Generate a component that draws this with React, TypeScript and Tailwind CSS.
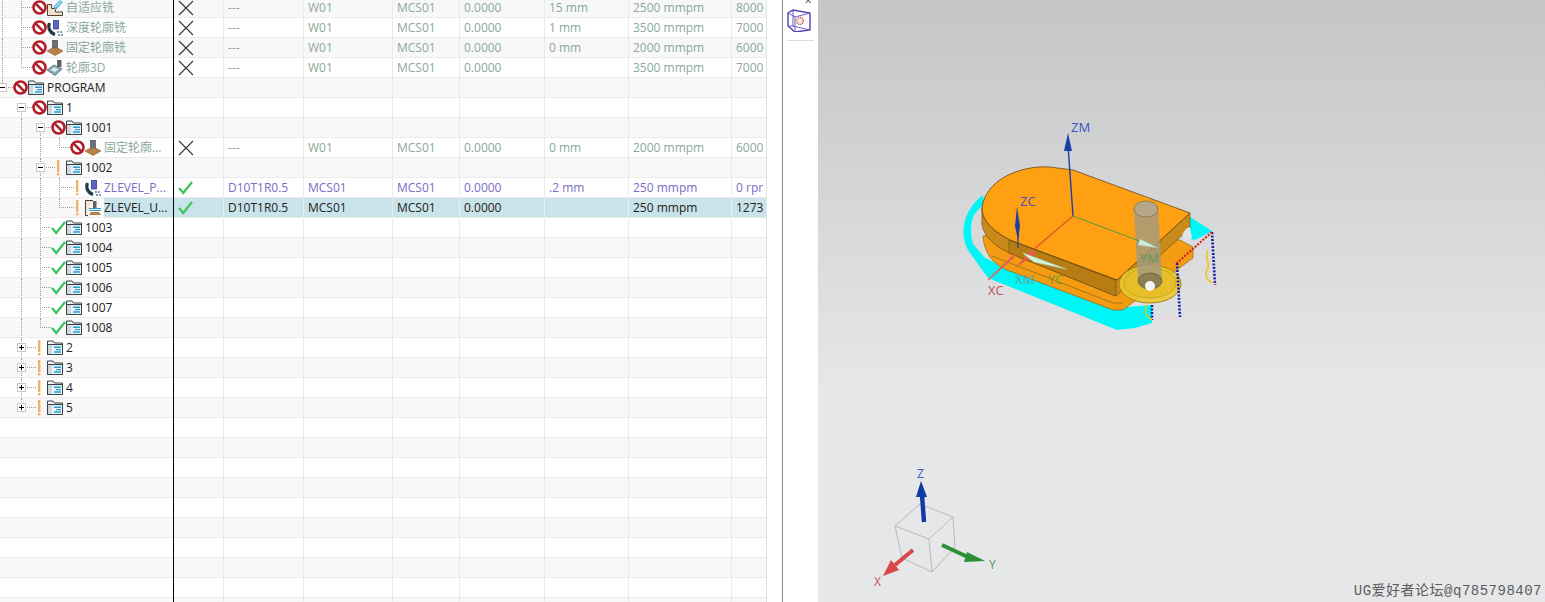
import React from "react";

const TEXT_FONT = "font-['Open_Sans','Noto_Sans_CJK_SC',sans-serif]";

type Status = "stop" | "warn" | "ok";
type Kind = "folder" | "adaptive" | "depth" | "fixed" | "contour" | "unfinish";

type Row = {
  name?: string;
  level?: number; // x of the status icon
  status?: Status;
  kind?: Kind;
  box?: "minus" | "plus";
  tone?: "off" | "new" | "sel" | "plain";
  path?: Status | "x";
  cells?: string[];
};

function offCells(a: string, b: string, c: string) {
  return ["---", "W01", "MCS01", "0.0000", a, b, c];
}

const rows: Row[] = [
  { name: "自适应铣", level: 32, status: "stop", kind: "adaptive", tone: "off", path: "x", cells: offCells("15 mm", "2500 mmpm", "8000") },
  { name: "深度轮廓铣", level: 32, status: "stop", kind: "depth", tone: "off", path: "x", cells: offCells("1 mm", "3500 mmpm", "7000") },
  { name: "固定轮廓铣", level: 32, status: "stop", kind: "fixed", tone: "off", path: "x", cells: offCells("0 mm", "2000 mmpm", "6000") },
  { name: "轮廓3D", level: 32, status: "stop", kind: "contour", tone: "off", path: "x", cells: offCells("", "3500 mmpm", "7000") },
  { name: "PROGRAM", level: 13, status: "stop", kind: "folder", box: "minus" },
  { name: "1", level: 32, status: "stop", kind: "folder", box: "minus" },
  { name: "1001", level: 51, status: "stop", kind: "folder", box: "minus" },
  { name: "固定轮廓...", level: 70, status: "stop", kind: "fixed", tone: "off", path: "x", cells: offCells("0 mm", "2000 mmpm", "6000") },
  { name: "1002", level: 51, status: "warn", kind: "folder", box: "minus" },
  { name: "ZLEVEL_P...", level: 70, status: "warn", kind: "depth", tone: "new", path: "ok", cells: ["D10T1R0.5", "MCS01", "MCS01", "0.0000", ".2 mm", "250 mmpm", "0 rpr"] },
  { name: "ZLEVEL_U...", level: 70, status: "warn", kind: "unfinish", tone: "sel", path: "ok", cells: ["D10T1R0.5", "MCS01", "MCS01", "0.0000", "", "250 mmpm", "1273"] },
  { name: "1003", level: 51, status: "ok", kind: "folder" },
  { name: "1004", level: 51, status: "ok", kind: "folder" },
  { name: "1005", level: 51, status: "ok", kind: "folder" },
  { name: "1006", level: 51, status: "ok", kind: "folder" },
  { name: "1007", level: 51, status: "ok", kind: "folder" },
  { name: "1008", level: 51, status: "ok", kind: "folder" },
  { name: "2", level: 32, status: "warn", kind: "folder", box: "plus" },
  { name: "3", level: 32, status: "warn", kind: "folder", box: "plus" },
  { name: "4", level: 32, status: "warn", kind: "folder", box: "plus" },
  { name: "5", level: 32, status: "warn", kind: "folder", box: "plus" },
];

const fillerRows: Row[] = Array.from({ length: 10 }, () => ({}));

function StopIcon() {
  return (
    <svg width="15" height="15" viewBox="0 0 15 15" className="shrink-0">
      <circle cx="7.5" cy="7.5" r="6" fill="#fff" stroke="#b01f2a" strokeWidth="2.6" />
      <path d="M3.2 3.2L11.8 11.8" stroke="#b01f2a" strokeWidth="2.6" />
    </svg>
  );
}

function WarnIcon() {
  return (
    <svg width="15" height="16" viewBox="0 0 15 16" className="shrink-0">
      <rect x="6" y="0" width="2.4" height="12" fill="#efb468" />
      <rect x="6" y="13" width="2.4" height="2.4" fill="#efb468" />
    </svg>
  );
}

function CheckIcon() {
  return (
    <svg width="15" height="15" viewBox="0 0 15 15" className="shrink-0">
      <path d="M1 8L5.2 13L14 2" fill="none" stroke="#3cc45c" strokeWidth="2.3" />
    </svg>
  );
}

function NodeIcon({ kind }: { kind: Kind }) {
  if (kind === "folder") {
    return (
      <svg width="16" height="15" viewBox="0 0 16 15" className="shrink-0">
        <path d="M.5 14.5V1H6L7.5 3H15.5V14.5Z" fill="#eceef0" stroke="#37424c" />
        <path d="M.5 14.5V4.5H15.5V14.5Z" fill="#d3d6d9" stroke="#37424c" />
        <rect x="5" y="5.5" width="10" height="8.5" fill="#e8f6fb" />
        <path d="M7 7.2H14M9 9.6H14M7 12H14" stroke="#2a9ccc" strokeWidth="1.4" />
      </svg>
    );
  }
  if (kind === "adaptive") {
    return (
      <svg width="16" height="16" viewBox="0 0 16 16" className="shrink-0">
        <path d="M.5 15.5V4.5H4.5V8.5H8.5V12H15.5V15.5Z" fill="#efe2cc" stroke="#4f3f2c" />
        <path d="M6 7L13 0L16 2L9 10Z" fill="#62b9de" />
        <path d="M8 7L14 2" stroke="#d9f1fa" />
      </svg>
    );
  }
  if (kind === "depth") {
    return (
      <svg width="16" height="16" viewBox="0 0 16 16" className="shrink-0">
        <path d="M2.5 3C.5 8 3 13 8 14.5" fill="none" stroke="#1c3d48" strokeWidth="3.2" />
        <rect x="6.5" y="0" width="5" height="9" fill="#5a66c4" stroke="#2b3380" strokeWidth=".7" />
        <path d="M10 12H16M11 15H16" stroke="#222a78" strokeWidth="1.2" strokeDasharray="2 1" />
      </svg>
    );
  }
  if (kind === "fixed") {
    return (
      <svg width="16" height="16" viewBox="0 0 16 16" className="shrink-0">
        <rect x="5.5" y="0" width="5" height="9" fill="#6c727a" stroke="#3c4248" strokeWidth=".6" />
        <path d="M0 11L5.5 8H10.5L16 11L8 15.5Z" fill="#b97f48" stroke="#8a5a30" strokeWidth=".6" />
      </svg>
    );
  }
  if (kind === "contour") {
    return (
      <svg width="16" height="16" viewBox="0 0 16 16" className="shrink-0">
        <path d="M0 10L7 5L15 9L8 15.5Z" fill="#8aa8b8" stroke="#4d6472" strokeWidth=".8" />
        <path d="M3 10L7 7L12 9L8 12.5Z" fill="#d9e6ec" stroke="#7c98a6" strokeWidth=".5" />
        <rect x="10" y="0" width="4.5" height="7" fill="#5b626c" />
      </svg>
    );
  }
  return (
    <svg width="16" height="16" viewBox="0 0 16 16" className="shrink-0">
      <path d="M.5 15.5V.5H8" fill="#f3e8d6" stroke="#4f3f2c" />
      <path d="M3 15.5H.5" stroke="#4f3f2c" />
      <rect x="8" y="1" width="3.5" height="7" fill="#5b626c" />
      <path d="M4 8.5H16M4 10.5H16" stroke="#2f9cc8" />
      <path d="M4 15L6 12H14L16 15Z" fill="#b97f48" />
    </svg>
  );
}

function TreeBox({ x, type }: { x: number; type: "minus" | "plus" }) {
  return (
    <span className="absolute top-[5px] h-[9px] w-[9px] border border-[#c8c8c8] bg-white" style={{ left: x }}>
      <span className="absolute left-[1px] top-[3px] h-px w-[5px] bg-black" />
      {type === "plus" && <span className="absolute left-[3px] top-[1px] h-[5px] w-px bg-black" />}
    </span>
  );
}

function Guides({ index, row }: { index: number; row: Row }) {
  // dotted tree connector lines for this row
  const lines: React.ReactNode[] = [];
  const v = (x: number, from: number, to: number) => lines.push(
    <span key={`v${x}`} className="absolute border-l border-dotted border-[#9c9c9c]" style={{ left: x, top: from, height: to - from }} />,
  );
  const h = (from: number, to: number) => lines.push(
    <span key={`h${from}`} className="absolute top-[9px] border-t border-dotted border-[#9c9c9c]" style={{ left: from, width: to - from }} />,
  );
  if (index <= 4) v(2, 0, index === 4 ? 5 : 20);
  if (index <= 3) v(21, 0, index === 3 ? 10 : 20);
  if (index >= 5 && index <= 20) v(21, index === 5 ? 10 : 0, index === 20 ? 6 : 20);
  if (index >= 6 && index <= 16) v(40, index === 6 ? 10 : 0, index === 16 ? 10 : 20);
  if (index === 7 || index === 10) v(59, 0, 10);
  if (index === 9) v(59, 0, 20);
  if (row.level) h(row.level - 11, row.level + (row.status === "warn" ? 4 : 0));
  return <>{lines}</>;
}

function TreeCell({ row, index }: { row: Row; index: number }) {
  const tone = row.tone === "off" ? "text-[#8ba89b]" : row.tone === "new" ? "text-[#7a6cc6]" : "text-[#222]";
  return (
    <div className="relative flex h-full w-[173px] shrink-0 items-center overflow-hidden border-b border-[#ebebeb]" style={{ paddingLeft: row.level }}>
      <Guides index={index} row={row} />
      {row.box && <TreeBox x={(row.level ?? 0) - 15} type={row.box} />}
      <span className="relative flex w-[15px] shrink-0 justify-center">
        {row.status === "stop" && <StopIcon />}
        {row.status === "warn" && <WarnIcon />}
        {row.status === "ok" && <CheckIcon />}
      </span>
      <span className="relative flex h-full items-center">
        {row.kind && <NodeIcon kind={row.kind} />}
      </span>
      <span className={`relative ml-[3px] flex h-full flex-1 items-center whitespace-nowrap ${row.tone === "sel" ? "bg-[#c9e3ea]" : ""} ${tone}`}>
        {row.name}
      </span>
    </div>
  );
}

const COLS = ["w-[80px]", "w-[89px]", "w-[67px]", "w-[85px]", "w-[84px]", "w-[103px]", "w-[35px]"];

function DataRow({ row, index }: { row: Row; index: number }) {
  const tone = row.tone === "off" ? "text-[#8ba89b]" : row.tone === "new" ? "text-[#7a6cc6]" : "text-[#222]";
  const bg = row.tone === "sel" ? "bg-[#c9e3ea]" : index % 2 === 0 ? "bg-[#f8f8f8]" : "bg-white";
  return (
    <div className={`flex h-5 ${index % 2 === 0 ? "bg-[#f8f8f8]" : "bg-white"}`}>
      <TreeCell row={row} index={index} />
      <div className={`h-full w-[50px] shrink-0 border-l border-black ${bg}`}>
        <div className="flex h-full items-center border-b border-[#ebebeb] pl-[4px]">
          {row.path === "x" && (
            <svg width="16" height="16" viewBox="0 0 16 16"><path d="M1 1L15 15M15 1L1 15" stroke="#333" strokeWidth="1.1" /></svg>
          )}
          {row.path === "ok" && <CheckIcon />}
        </div>
      </div>
      {[0, 1, 2, 3, 4, 5, 6].map((c) => (
        <div key={c} className={`flex h-full shrink-0 items-center overflow-hidden whitespace-nowrap border-b border-l border-[#ebebeb] pl-1 ${COLS[c]} ${bg} ${tone}`}>
          {row.cells?.[c]}
        </div>
      ))}
    </div>
  );
}

function OperationTable() {
  return (
    <div className={`h-full w-[767px] shrink-0 overflow-hidden border-r border-[#e2e2e2] text-[12px] ${TEXT_FONT}`}>
      <div className="-mt-[2px]">
        {rows.concat(fillerRows).map((r, i) => (
          <DataRow key={i} row={r} index={i} />
        ))}
      </div>
    </div>
  );
}

function ViewToolbar() {
  return (
    <div className={`relative h-full w-[36px] shrink-0 border-l border-[#8e8e8e] bg-white px-[4px] ${TEXT_FONT}`}>
      <span className="absolute -top-[9px] right-[7px] text-[11px] text-[#333]">x</span>
      <div className="flex h-[41px] items-center justify-center border-b border-[#dcdcdc]">
        <svg width="24" height="24" viewBox="787 8 24 24" className="-ml-[3px]">
          <path d="M788 13L793 10L810 13V30L795 32L788 26Z" fill="#fdfcff" stroke="#4e43bc" strokeWidth="1.4" />
          <path d="M788 13L795 17V32M795 17L810 13M793 10V26L788 26M793 26L810 30" fill="none" stroke="#5a4fc0" strokeWidth=".9" />
          <circle cx="800" cy="21" r="3.5" fill="#f6e2d8" stroke="#b8463a" strokeWidth="1.3" strokeDasharray="1 1" />
        </svg>
      </div>
    </div>
  );
}

function Model() {
  return (
    <svg viewBox="818 0 727 602" className="absolute inset-0 h-full w-full" fontFamily="Open Sans, sans-serif">
      {/* cyan tool path band */}
      <path d="M983 195C965 208 958 232 968 250L988 278L1117 330L1135 328L1152 323L1152 305L1113 308L1007 268L985 258L973 244C968 226 972 212 984 205Z" fill="#00f6f6" />
      <path d="M1190 217L1212 231L1195 240L1186 238L1190 228Z" fill="#00f6f6" />
      {/* lower plate */}
      <path d="M983 236C984 255 995 265 1007 270L1113 310H1123L1193 258V247L1180 240L1000 232Z" fill="#f39b12" stroke="#7d5c18" strokeWidth=".6" />
      <path d="M992 256L1113 303L1123 303" fill="none" stroke="#8a6518" strokeWidth=".7" />
      {/* side faces */}
      <path d="M982 208V224C983 236 995 246 1009 253L1116 296L1190 228V213L1117 280L1010 240C995 232 982 222 982 208Z" fill="#c98a1c" stroke="#5c4310" strokeWidth=".6" />
      <path d="M1009 240V253L1116 296V280Z" fill="#b87c14" stroke="#5c4310" strokeWidth=".5" />
      <path d="M1190 227C1182 230 1180 238 1186 241L1192 238Z" fill="#e3e4e5" />
      {/* top face */}
      <path d="M982 208C985 180 1020 165 1050 167L1073 170L1190 213L1117 280L1010 240C995 232 982 222 982 208Z" fill="#ffa012" stroke="#4e3a10" strokeWidth=".7" />
      {/* disc */}
      <ellipse cx="1150" cy="284" rx="31" ry="19" fill="#e9c62f" fillOpacity=".9" stroke="#a8860f" />
      <ellipse cx="1150" cy="283" rx="26" ry="15" fill="#e6bf28" stroke="#b89614" strokeWidth=".6" />
      {/* tool cylinder */}
      <path d="M1134 210L1138 281C1141 290 1160 290 1162 280L1158 208Z" fill="#a49a80" fillOpacity=".82" />
      <ellipse cx="1146" cy="209" rx="12" ry="8" fill="#b5a78a" stroke="#7c6d50" strokeWidth=".7" />
      <ellipse cx="1150" cy="281" rx="12" ry="8" fill="#8e7f50" stroke="#5c5030" strokeWidth=".6" />
      <circle cx="1150" cy="286" r="5" fill="#f4f4f4" />
      {/* machine csys */}
      <path d="M1073 216L1068 145" stroke="#1a3fa8" strokeWidth="1.4" />
      <path d="M1068 133L1072 151H1064Z" fill="#1a3fa8" />
      <path d="M1073 216L1142 242" stroke="#4f9a45" strokeWidth="1" />
      <path d="M1158 248L1140 239L1138 245Z" fill="#cdeedd" stroke="#8fcaa8" strokeWidth=".5" />
      <path d="M1073 216L1033 250" stroke="#e0552c" strokeWidth="1.3" />
      <path d="M1015 268L1032 249L1036 254Z" fill="#e85a4a" />
      {/* work csys */}
      <path d="M1018 248V225" stroke="#1a3fa8" strokeWidth="1.2" />
      <path d="M1017 207L1020 226L1018 240L1015 226Z" fill="#1a3fa8" />
      <path d="M1015 254L1013 258L988 280Z" fill="#e8605a" stroke="#e8605a" strokeWidth="1.2" />
      <path d="M1023 253L1066 269L1034 262L1026 256Z" fill="#d4f2e0" stroke="#a8dcbc" strokeWidth=".6" />
      {/* path dots */}
      <path d="M1212 232L1215 285M1177 263L1180 317M1152 305V320" stroke="#1c1ca8" strokeWidth="2.6" strokeDasharray="2 1.5" fill="none" />
      <path d="M1212 232L1177 263" stroke="#d81f1f" strokeWidth="2.2" strokeDasharray="2 1.5" />
      <path d="M1208 250C1204 258 1210 262 1208 268C1203 275 1208 282 1214 283" fill="none" stroke="#f5c000" strokeWidth="1.4" />
      <path d="M1147 305C1143 312 1148 318 1152 320" fill="none" stroke="#f5c000" strokeWidth="1.4" />
      <path d="M1158 320C1165 316 1172 316 1178 318" fill="none" stroke="#f4cfe0" strokeWidth="1.4" />
      {/* labels */}
      <text x="1071" y="132" fontSize="13" fill="#3a55c0">ZM</text>
      <text x="1020" y="206" fontSize="13" fill="#4a50b8">ZC</text>
      <text x="988" y="295" fontSize="13" fill="#c0505a">XC</text>
      <text x="1015" y="284" fontSize="13" fill="#6aa0a0">XM</text>
      <text x="1048" y="284" fontSize="13" fill="#6f9a30">YC</text>
      <text x="1140" y="263" fontSize="13" fill="#5f9a55">YM</text>
      {/* view triad */}
      <path d="M895 526L920 504L953 517L929 539ZM895 526L902 558L932 572L929 539M932 572L955 547L953 517" fill="none" stroke="#b9b9b9" strokeWidth="1" />
      <path d="M924 522L922 495" stroke="#0f3aa8" strokeWidth="4.4" />
      <path d="M921 481L927 497H916Z" fill="#0f3aa8" />
      <path d="M942 545L970 558" stroke="#2f8f36" strokeWidth="4" />
      <path d="M985 561L967 552L964 562Z" fill="#2f8f36" />
      <path d="M913 550L895 565" stroke="#d9474a" strokeWidth="4" />
      <path d="M883 576L891 560L899 570Z" fill="#d9474a" />
      <text x="917" y="478" fontSize="12" fill="#3a55c0">Z</text>
      <text x="989" y="569" fontSize="12" fill="#4f9a55">Y</text>
      <text x="874" y="586" fontSize="12" fill="#c0505a">X</text>
    </svg>
  );
}

function Viewport() {
  return (
    <div className="relative h-full flex-1 overflow-hidden bg-gradient-to-b from-[#c4c5c7] from-0% to-[#e6e7e9] to-65%">
      <Model />
      <span className="absolute bottom-0 right-[3px] font-['Liberation_Mono','Noto_Sans_CJK_SC',monospace] text-[14px] tracking-[0.5px] text-[#5c5c5c]">
        UG爱好者论坛@q785798407
      </span>
    </div>
  );
}

export default function App() {
  return (
    <div className="flex h-[602px] w-[1545px] overflow-hidden bg-white">
      <OperationTable />
      <div className="h-full w-[15px] shrink-0 bg-white" />
      <ViewToolbar />
      <Viewport />
    </div>
  );
}
